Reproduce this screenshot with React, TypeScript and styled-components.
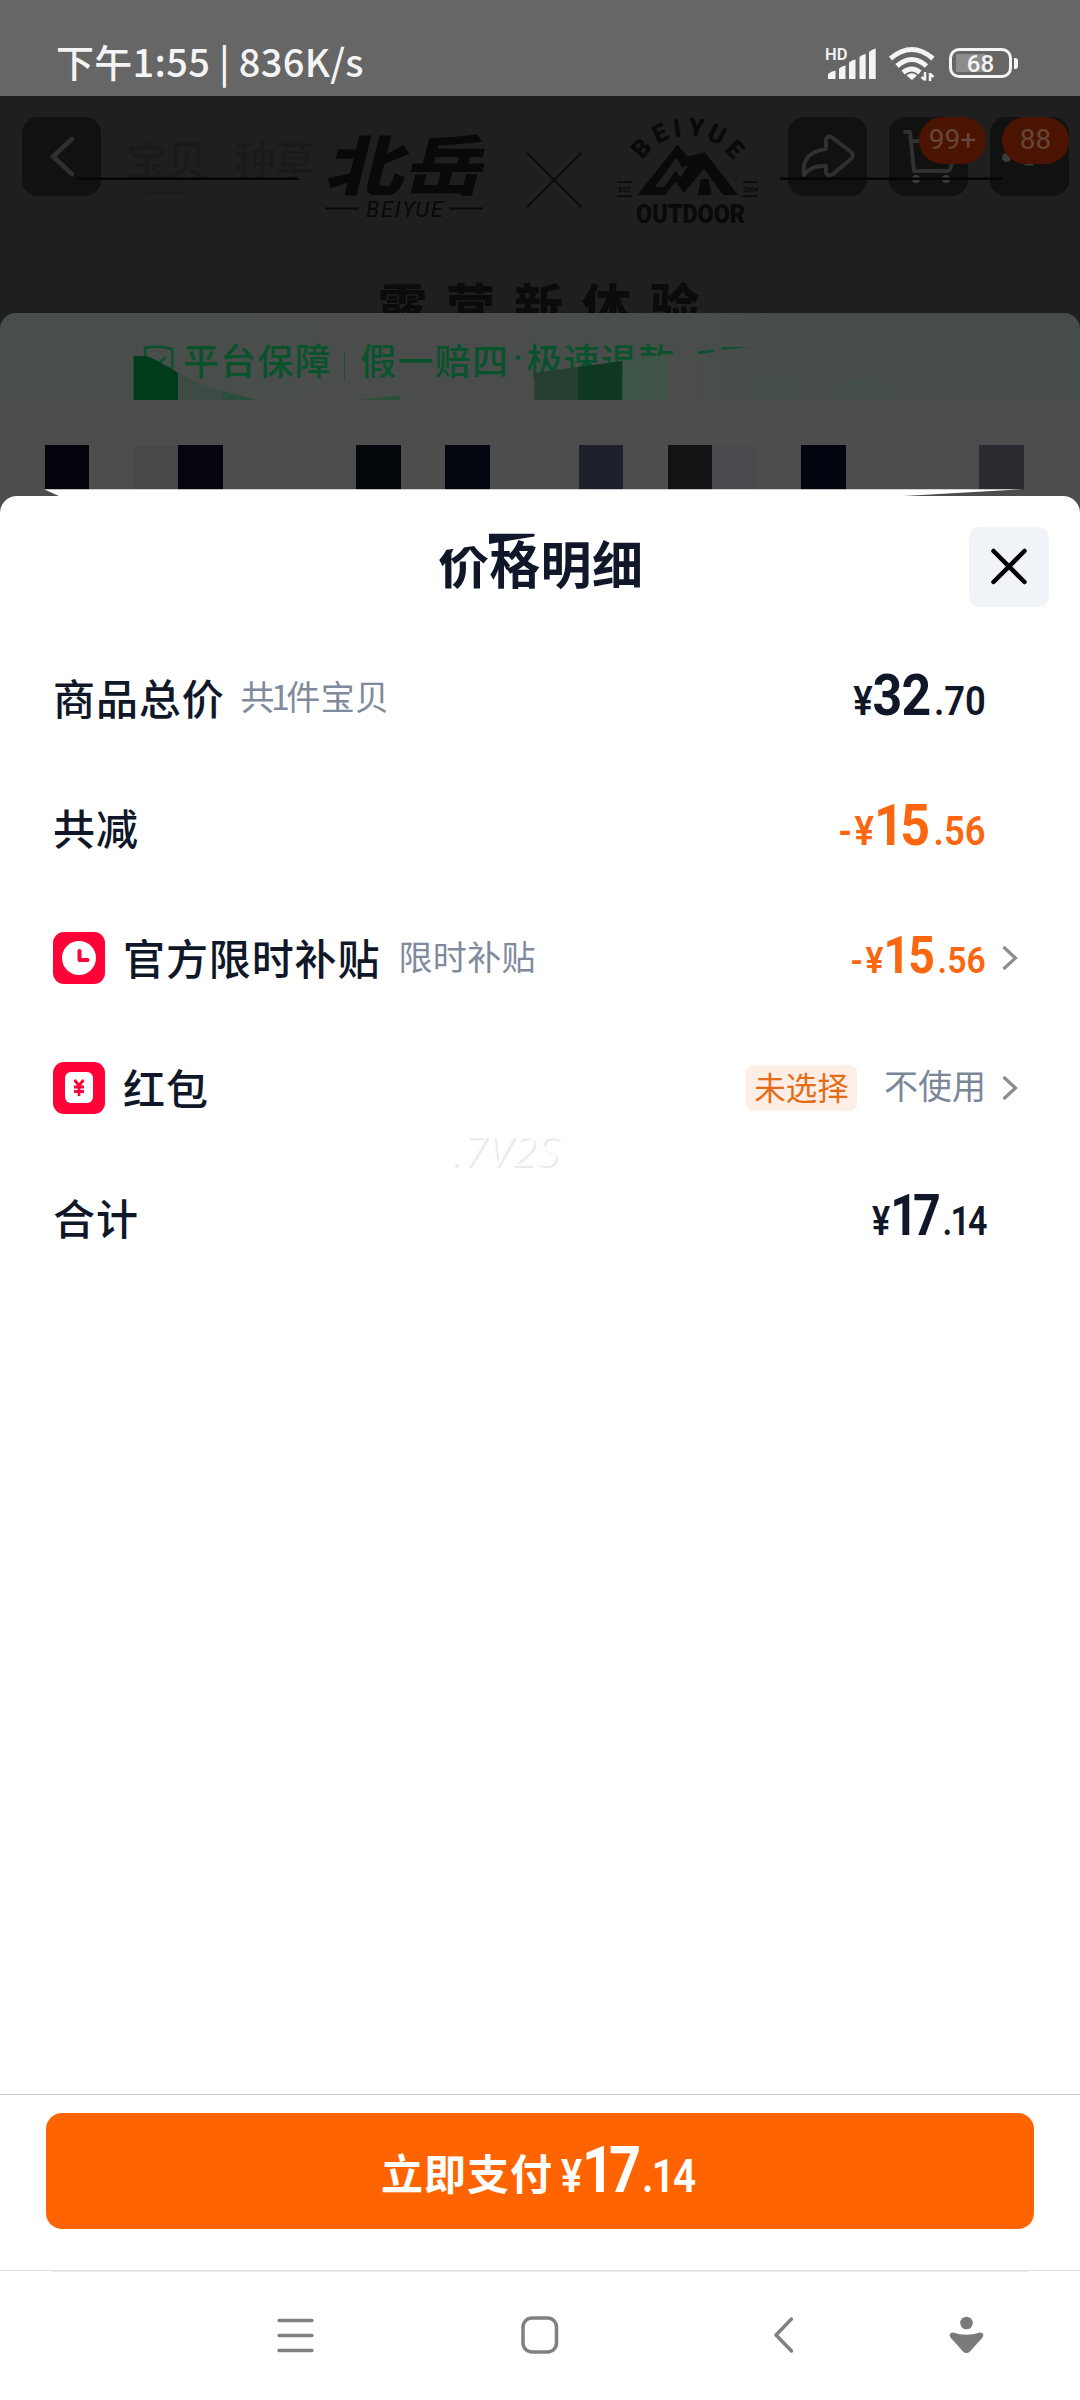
import React from "react";
import styled, { createGlobalStyle } from "styled-components";

const CJK = `"Noto Sans CJK SC", "Noto Sans", sans-serif`;
const NUM = `Roboto, "Noto Sans CJK SC", sans-serif`;

const Global = createGlobalStyle`
  * { box-sizing: border-box; }
  html, body { margin: 0; padding: 0; background: #fff; }
  body { font-family: ${CJK}; line-height: 1; }
  svg { display: block; flex: none; }
`;

const Screen = styled.div`
  width: 1080px;
  height: 2400px;
  display: flex;
  flex-direction: column;
  background: #fff;
  overflow: hidden;
  white-space: nowrap;
`;

/* status bar */
const StatusBar = styled.header`
  height: 96px;
  flex: none;
  background: #666;
  color: #f4f4f4;
  display: flex;
  justify-content: space-between;
  padding: 0 62px 0 56px;
`;
const StatusText = styled.div`
  padding-top: 42px;
  font-size: 38px;
  font-weight: 500;
  letter-spacing: 0.3px;
`;
const StatusIcons = styled.div`
  display: flex;
  align-items: flex-start;
  padding-top: 44px;
  gap: 12px;
`;
const Battery = styled.div`
  display: flex;
  align-items: center;
  gap: 2px;
  padding-top: 4px;
`;
const BatteryBody = styled.div`
  width: 63px;
  height: 30px;
  border: 3px solid #f4f4f4;
  border-radius: 10px;
  background: linear-gradient(#8c8c8c, #8c8c8c) 4px 3px / 30px 18px no-repeat;
  font: 500 24px/26px ${NUM};
  text-align: center;
`;
const BatteryTip = styled.div`
  width: 4px;
  height: 11px;
  border-radius: 0 3px 3px 0;
  background: #f4f4f4;
`;

/* dimmed product page */
const Hero = styled.section`
  position: relative;
  height: 217px;
  flex: none;
  background: #1f1f1f;
  overflow: hidden;
`;
const HeroBar = styled.div`
  display: flex;
  align-items: flex-start;
  padding: 21px 11px 0 22px;
  height: 100px;
`;
const HeroButton = styled.div`
  position: relative;
  width: 79px;
  height: 79px;
  border-radius: 16px;
  background: #111;
`;
const HeroActions = styled.div`
  display: flex;
  gap: 22px;
  margin-left: auto;
`;
const FaintTabs = styled.div`
  display: flex;
  gap: 28px;
  padding: 21px 0 0 26px;
  font-size: 40px;
  font-weight: 500;
  color: #1a1a1a;
`;
const Badge = styled.span<{ $right: number }>`
  position: absolute;
  top: 0;
  right: ${(p) => p.$right}px;
  width: 67px;
  height: 47px;
  border-radius: 24px;
  background: #4b1400;
  color: #66463b;
  font: 400 28px/46px ${NUM};
  text-align: center;
`;
const HeroArt = styled.svg`
  position: absolute;
  left: 0;
  top: 0;
`;
const Slogan = styled.div`
  padding: 83px 0 0 378px;
  font-size: 49px;
  font-weight: 900;
  letter-spacing: 19px;
  color: #0b0b0b;
`;

const CardWrap = styled.section`
  position: relative;
  height: 183px;
  flex: none;
  background: linear-gradient(#1f1f1f 40px, #4d4d4d 40px);
`;
const Guarantee = styled.div`
  height: 87px;
  border-radius: 16px 16px 0 0;
  background: linear-gradient(90deg, #494e4b, #4a4d4b 40%, #484d4b 70%, #454c4a);
  display: flex;
  align-items: flex-start;
  padding: 28px 0 0 183px;
  font-size: 36px;
  font-weight: 500;
  color: #08532c;
  letter-spacing: 1.3px;
`;
const Divider = styled.i`
  width: 1px;
  height: 28px;
  margin: 11px 15px 0 12px;
  background: #1d5238;
`;
const Bullet = styled.span`
  width: 17px;
  font-family: ${NUM};
  letter-spacing: 0;
  text-align: center;
`;
const GuaranteeArt = styled.svg`
  position: absolute;
  left: 0;
  top: 0;
`;
const Mosaic = styled.div`
  display: grid;
  grid-template-columns: repeat(22, 44.5px);
  height: 45px;
  margin: 45px 0 0 44.5px;
`;
const Cell = styled.i<{ $c: string }>`
  background: ${(p) => p.$c};
`;

/* price sheet */
const Sheet = styled.main`
  position: relative;
  flex: 1;
  display: flex;
  flex-direction: column;
`;
const SheetHead = styled.div`
  height: 137px;
  background: #fff;
  border-radius: 17px 17px 0 0;
  display: flex;
  align-items: flex-start;
  justify-content: space-between;
  padding: 31px 31px 0 438px;
`;
const SheetCorner = styled.div`
  background: linear-gradient(#4d4d4d 40px, #fff 40px);
`;
const Title = styled.h1`
  margin: 10px 0 0;
  font-size: 51px;
  font-weight: 700;
  letter-spacing: 0.3px;
  color: #0f1729;
`;
const Close = styled.button`
  width: 80px;
  height: 80px;
  padding: 0;
  border: 0;
  border-radius: 10px;
  background: #f0f4f9;
  display: grid;
  place-items: center;
`;
const TitleArt = styled.svg`
  position: absolute;
  left: 0;
  top: -7px;
`;
const Row = styled.div`
  height: 130px;
  display: flex;
  align-items: center;
  padding-left: 53px;
`;
const RowIcon = styled.div`
  width: 52px;
  height: 52px;
  border-radius: 11px;
  background: #fe0338;
  margin-right: 18px;
`;
const Label = styled.span`
  margin-bottom: 2px;
  font-size: 42px;
  font-weight: 500;
  letter-spacing: 0.9px;
  color: #0f1729;
`;
const Sub = styled.span<{ $gap: number }>`
  margin: 0 0 5px ${(p) => p.$gap}px;
  font-size: 34px;
  letter-spacing: 0.4px;
  color: #7f8a9c;
`;
const Count = styled.span`
  margin: 0 -4px;
`;
const Value = styled.div`
  margin-left: auto;
  display: flex;
  align-items: center;
`;
const Tail = styled.div`
  width: 94px;
  padding-left: 16px;
`;
const Price = styled.div<{ $color: string; $scale?: number }>`
  display: flex;
  align-items: baseline;
  font-family: ${NUM};
  font-weight: 700;
  margin-bottom: 5px;
  color: ${(p) => p.$color};
  transform: scaleX(${(p) => p.$scale ?? 0.91});
  transform-origin: right;
`;
const Small = styled.span<{ $size: number; $gap?: number; $ls?: number }>`
  font-size: ${(p) => p.$size}px;
  font-weight: 600;
  letter-spacing: ${(p) => p.$ls ?? 0}px;
  margin-left: ${(p) => p.$gap ?? 0}px;
`;
const Big = styled.span<{ $size: number; $ls?: number }>`
  font-size: ${(p) => p.$size}px;
  letter-spacing: ${(p) => p.$ls ?? 0}px;
`;
const Tag = styled.span`
  width: 111px;
  height: 46px;
  border-radius: 8px;
  background: #feeee5;
  color: #e56c17;
  font-size: 31.500px;
  line-height: 43px;
  text-align: center;
  margin-right: 27px;
`;
const Unused = styled.span`
  font-size: 34px;
  margin-bottom: 6px;
  color: #7a8799;
`;
const Watermark = styled.div`
  position: absolute;
  left: 452px;
  top: 632px;
  font: italic 300 43px/1 "Noto Sans", sans-serif;
  letter-spacing: 1px;
  color: #fdfdfd;
  text-shadow: 2px 2px 1px #e8e8e8;
`;

const PayBar = styled.footer`
  height: 176px;
  flex: none;
  border-top: 1px solid #ccc;
  padding: 18px 46px 0;
`;
const PayButton = styled.button`
  width: 100%;
  height: 116px;
  border: 0;
  border-radius: 16px;
  padding: 0 0 0 335px;
  background: #ff6400;
  color: #fff;
  display: flex;
  align-items: center;
  font-family: ${CJK};
`;
const PayLabel = styled.span`
  font-size: 42px;
  font-weight: 700;
  letter-spacing: 1px;
  margin-right: 8px;
`;
const PayPrice = styled(Price)`
  transform-origin: left;
  margin: 0 0 2px;
`;
const NavBar = styled.nav`
  height: 130px;
  flex: none;
  border-top: 1px solid #e0e0e0;
  background: linear-gradient(#ececec, #ececec) 52px 0 / 975px 1px no-repeat;
  display: flex;
  align-items: flex-start;
  padding: 43px 0 0 275px;
`;
const NavItem = styled.div<{ $w: number }>`
  width: ${(p) => p.$w}px;
`;

const Amount = ({ minus, int, dec, color, big = 57, small = 40, ls = 0, decLs = 0, gap = 2, scale }: {
  minus?: boolean; int: string; dec: string; color: string; big?: number; small?: number;
  ls?: number; decLs?: number; gap?: number; scale?: number;
}) => (
  <Price $color={color} $scale={scale}>
    {minus && <Small $size={small}>-</Small>}
    <Small $size={small} $gap={minus ? 3 : 0}>¥</Small>
    <Big $size={big} $ls={ls}>{int}</Big>
    <Small $size={small} $gap={gap} $ls={decLs}>.{dec}</Small>
  </Price>
);

const Chevron = () => (
  <svg width="16" height="26" viewBox="0 0 16 26" fill="none" stroke="#8a8d93" strokeWidth="3.200">
    <path d="M1.500 2 13.500 13 1.500 24" />
  </svg>
);

const mosaic: Record<number, string> = {
  0: "#05040c", 2: "#484848", 3: "#05050f", 7: "#04070c", 9: "#03060f",
  12: "#1e212b", 14: "#111314", 15: "#4b4a4f", 17: "#02050f", 21: "#2c2b31",
};

const arc: [string, number, number, number][] = [
  ["B", 641, 148, -48], ["E", 660, 133, -27], ["I", 677, 128, -9],
  ["Y", 696.5, 127, 6], ["U", 717, 134, 27], ["E", 735, 149, 46],
];

export default function App() {
  return (
    <Screen>
      <Global />
      <StatusBar>
        <StatusText>下午1:55 | 836K/s</StatusText>
        <StatusIcons>
          <svg width="52" height="38" viewBox="824 44 52 38" fill="#f4f4f4">
            <text x="824" y="59.5" fontFamily="Roboto" fontWeight="600" fontSize="16.5">HD</text>
            <path d="M827 79V74Q830 71 834.500 70.500V79ZM838 79V68.500Q841 66 844.500 65.500V79ZM848 79V62.500Q851 60 854.500 59.500V79ZM858.500 79V57Q861 54.500 864.700 54V79ZM868 79V52Q871 49 874.700 48.500V79Z" />
          </svg>
          <svg width="48" height="38" viewBox="888 44 48 38" fill="none" stroke="#f4f4f4" strokeWidth="5">
            <path d="M889.500 58.500Q910.800 40.500 932 58.500M896 66Q910.800 53 925.500 66M902 72.500Q910.800 65.500 919 72.500" />
            <path d="M905.500 75.500Q910.800 71 916 75.500L911 80Z" fill="#f4f4f4" stroke="none" />
            <path d="M924 72V80.500M920.500 77 924 80M929 81V73M932.500 77 929 74" strokeWidth="2.500" />
          </svg>
          <Battery>
            <BatteryBody>68</BatteryBody>
            <BatteryTip />
          </Battery>
        </StatusIcons>
      </StatusBar>

      <Hero>
        <HeroBar>
          <HeroButton>
            <svg width="79" height="79" fill="none" stroke="#303030" strokeWidth="4.500" strokeLinecap="round">
              <path d="M50 22 31 39.500 50 57" />
            </svg>
          </HeroButton>
          <FaintTabs><span>宝贝</span><span>种草</span></FaintTabs>
          <HeroActions>
            <HeroButton>
              <svg width="79" height="79" viewBox="788 117 79 79" fill="none" stroke="#303030" strokeWidth="4" strokeLinejoin="round" strokeLinecap="round">
                <path d="M804 175Q801 152 826 149V140Q828 134 833 138L851 152Q855 156 851 159L833 174Q828 178 826 172V166Q811 165 804 175Z" />
              </svg>
            </HeroButton>
            <HeroButton>
              <svg width="79" height="79" viewBox="889 117 79 79" fill="none" stroke="#303030" strokeWidth="4" strokeLinejoin="round" strokeLinecap="round">
                <path d="M905 132H910L914 171H947Q951 171 952 161M911 141H930" />
                <g fill="#3b3b3b" stroke="none"><circle cx="916" cy="179" r="4" /><circle cx="946" cy="179" r="4" /></g>
              </svg>
              <Badge $right={-18}>99+</Badge>
            </HeroButton>
            <HeroButton>
              <svg width="79" height="79" viewBox="990.500 117 79 79" fill="#3b3b3b">
                <circle cx="1007" cy="157.500" r="4.500" /><rect x="1025" y="163.500" width="9" height="2" />
              </svg>
              <Badge $right={0}>88</Badge>
            </HeroButton>
          </HeroActions>
        </HeroBar>
        <Slogan>露营新体验</Slogan>
        <HeroArt width="1080" height="217" viewBox="0 96 1080 217" fill="#090909">
          <path d="M77 177.500H297L300 180H79ZM780 177.500H1002V180H780Z" fill="#050505" />
          <text transform="translate(324 190) skewX(-14) scale(1.210 1)" x="0" y="0" fontFamily="Noto Sans CJK SC" fontWeight="900" fontSize="65">北岳</text>
          <path d="M325 207.500H359V209.500H325ZM449 207.500H483V209.500H449Z" />
          <text x="366" y="217.300" fontFamily="Roboto" fontStyle="italic" fontSize="22" textLength="77">BEIYUE</text>
          <path d="M527 153 581 207M581 153 527 207" stroke="#0c0c0c" strokeWidth="2.200" />
          {arc.map(([c, x, y, r], i) => (
            <text key={i} transform={`translate(${x} ${y}) rotate(${r})`} y="9" textAnchor="middle" fontFamily="Roboto" fontWeight="900" fontSize="25">{c}</text>
          ))}
          <path fillRule="evenodd" d="M637.500 195 677.500 144.500 687.500 156.500 705 152.500 738 195H723L704 168.500 684 193 675.500 181.500 665 195ZM655 187H664L675.500 171 680.500 177.500 688 165.500 682 167.500 676 158Z" />
          <path d="M701 179H708.500L711.500 195H697.500Z" />
          <text x="636" y="223" fontFamily="Roboto" fontWeight="900" fontSize="25.500" textLength="109" lengthAdjust="spacingAndGlyphs">OUTDOOR</text>
          <path d="M617 181.500H632V183H617ZM617 195.500H632V197H617ZM743 181.500H758V183H743ZM743 195.500H758V197H743Z" />
          <text x="618.500" y="192" fontFamily="Roboto" fontWeight="700" fontSize="7">EST</text>
          <text x="743" y="192" fontFamily="Roboto" fontWeight="700" fontSize="6.500">2004</text>
          <path d="M148 193H182" stroke="#1a1a1a" strokeWidth="2" />
        </HeroArt>
      </Hero>

      <CardWrap>
        <Guarantee>
          平台保障<Divider />假一赔四<Bullet>·</Bullet>极速退款
        </Guarantee>
        <GuaranteeArt width="1080" height="100" viewBox="0 313 1080 100">
          <path d="M145 348Q158 345 172 349 174 370 169 375L155 366Q143 357 145 348ZM154 361 158 364 166 357" fill="none" stroke="#08532c" strokeWidth="2.500" />
          <path d="M133.600 356H146Q158 360 178 373V400H133.600Z" fill="#003c1b" />
          <path d="M178 373Q200 385 223 391V400H178Z" fill="#3c4b43" />
          <path d="M223 391Q240 396 258 400H223Z" fill="#2b4d3b" />
          <path d="M250 399.500H366Q310 406 250 399.500Z" fill="#4a4d4b" />
          <path d="M358 400 400 395.500V400Z" fill="#2b4f3b" />
          <path d="M534.400 373 578 367V400H534.400Z" fill="#263e31" />
          <path d="M578 367 622.500 361V400H578Z" fill="#0e3820" />
          <path d="M622.500 361 667 355V400H622.500Z" fill="#3f5547" />
          <path d="M667 355 700 350V400H667Z" fill="#4a4d49" />
          <path d="M755 375H800V400H755ZM840 380H889V400H840Z" fill="#454f49" />
          <path d="M698 351.500 714 349.500V352L698 354ZM721.500 347H750L721.500 350Z" fill="#0c5030" />
        </GuaranteeArt>
        <Mosaic>
          {Array.from({ length: 22 }, (_, i) => <Cell key={i} $c={mosaic[i] ?? "transparent"} />)}
        </Mosaic>
      </CardWrap>

      <Sheet>
        <SheetCorner>
          <SheetHead>
            <Title>价格明细</Title>
            <Close aria-label="关闭">
              <svg width="40" height="40" fill="none" stroke="#000" strokeWidth="4.500" strokeLinecap="round">
                <path d="M4.500 4 35.500 35M35.500 4 4.500 35" />
              </svg>
            </Close>
          </SheetHead>
        </SheetCorner>
        <TitleArt width="1080" height="70" viewBox="0 489 1080 70">
          <path d="M44 489.300H1023L895 496.500H60Z" fill="#fff" />
          <path d="M438 530H489V544L438 551Z" fill="#fff" />
          <path d="M489 533.700H534.500V536.500L489 544Z" fill="#0f1729" />
        </TitleArt>
        <Row>
          <Label>商品总价</Label><Sub $gap={16}>共<Count>1</Count>件宝贝</Sub>
          <Value><Amount int="32" dec="70" color="#0f1729" ls={-1} gap={4} /><Tail /></Value>
        </Row>
        <Row>
          <Label>共减</Label>
          <Value><Amount minus int="15" dec="56" color="#fb6611" ls={-4} gap={8} /><Tail /></Value>
        </Row>
        <Row>
          <RowIcon>
            <svg width="52" height="52" fill="none" stroke="#fe0338" strokeWidth="4" strokeLinecap="round" strokeLinejoin="round">
              <circle cx="26" cy="26" r="17" fill="#fff" stroke="none" /><path d="M26.500 19V28H34.500" />
            </svg>
          </RowIcon>
          <Label>官方限时补贴</Label><Sub $gap={18}>限时补贴</Sub>
          <Value><Amount minus int="15" dec="56" color="#fb6611" big={51} small={37} ls={-2} gap={5} /><Tail><Chevron /></Tail></Value>
        </Row>
        <Row>
          <RowIcon>
            <svg width="52" height="52" fill="none" stroke="#fe0338" strokeWidth="2.800">
              <rect x="12" y="10" width="28" height="31" rx="6" fill="#fff" stroke="none" />
              <path d="M21.500 18 26 23.500 30.500 18M26 23V34M21 25H31M21 29.500H31" />
            </svg>
          </RowIcon>
          <Label>红包</Label>
          <Value><Tag>未选择</Tag><Unused>不使用</Unused><Tail><Chevron /></Tail></Value>
        </Row>
        <Row>
          <Label>合计</Label>
          <Value><Amount int="17" dec="14" color="#0f1729" ls={-6} gap={8} decLs={-2} scale={0.85} /><Tail /></Value>
        </Row>
        <Watermark>.7V2S</Watermark>
      </Sheet>

      <PayBar>
        <PayButton>
          <PayLabel>立即支付</PayLabel>
          <PayPrice $color="#fff" $scale={0.86}>
            <Small $size={46}>¥</Small>
            <Big $size={65} $ls={-6}>17</Big>
            <Small $size={47} $gap={7} $ls={-2}>.14</Small>
          </PayPrice>
        </PayButton>
      </PayBar>
      <NavBar>
        <NavItem $w={244}>
          <svg width="42" height="42" stroke="#808080" strokeWidth="3.300" strokeLinecap="round">
            <path d="M4 6.500H37M4 21.500H37M4 36.500H37" />
          </svg>
        </NavItem>
        <NavItem $w={253}>
          <svg width="42" height="42" fill="none" stroke="#808080" strokeWidth="3.500">
            <rect x="4" y="4" width="33.500" height="34" rx="9" />
          </svg>
        </NavItem>
        <NavItem $w={174}>
          <svg width="42" height="42" fill="none" stroke="#808080" strokeWidth="3.500" strokeLinecap="round" strokeLinejoin="round">
            <path d="M19.500 5 4 21 19.500 37" />
          </svg>
        </NavItem>
        <NavItem $w={42}>
          <svg width="42" height="42" fill="#7a7a7a">
            <circle cx="20.500" cy="9" r="6.300" />
            <path d="M7 18.500Q20.500 23 34 18.500 39 19 36.500 23.500L24 37.500Q20.500 40.500 17 37.500L4.500 23.500Q2 19 7 18.500Z" />
          </svg>
        </NavItem>
      </NavBar>
    </Screen>
  );
}
